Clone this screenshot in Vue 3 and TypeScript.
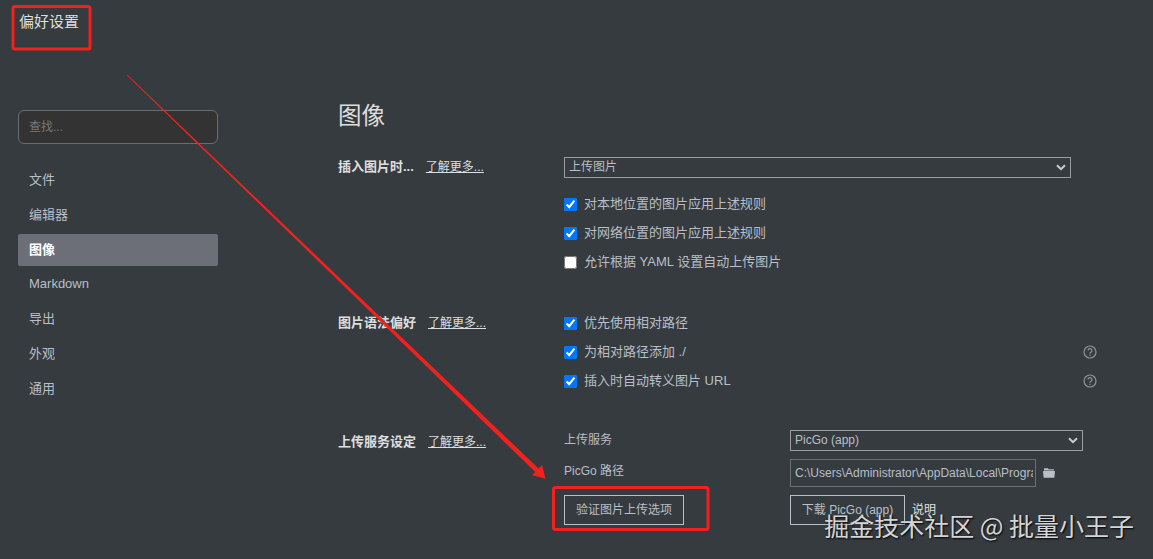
<template>
  <div class="preferences">
    <header class="title-bar">
      <span class="title">偏好设置</span>
    </header>

    <div class="body">
      <aside class="sidebar">
        <input v-model="keyword" class="search" type="text" placeholder="查找..." />
        <nav class="menu">
          <a v-for="item in menuItems" :key="item" class="menu-item" :class="{ active: item === activeItem }"
            @click="activeItem = item">{{ item }}</a>
        </nav>
      </aside>

      <main class="content">
        <h2>图像</h2>

        <section class="group insert-group">
          <div class="group-label">
            <strong>插入图片时...</strong>
            <a class="more">了解更多...</a>
          </div>
          <div class="group-body">
            <div class="select wide">
              <span>上传图片</span>
              <svg class="chevron" viewBox="0 0 10 7"><path d="M1 1.2 5 5.2 9 1.2" /></svg>
            </div>
            <label v-for="rule in insertRules" :key="rule.text" class="check-row">
              <input v-model="rule.checked" type="checkbox" />
              <span>{{ rule.text }}</span>
            </label>
          </div>
        </section>

        <section class="group syntax-group">
          <div class="group-label">
            <strong>图片语法偏好</strong>
            <a class="more">了解更多...</a>
          </div>
          <div class="group-body">
            <label v-for="rule in syntaxRules" :key="rule.text" class="check-row">
              <input v-model="rule.checked" type="checkbox" />
              <span>{{ rule.text }}</span>
              <svg v-if="rule.help" class="help" viewBox="0 0 14 14">
                <circle cx="7" cy="7" r="6" />
                <path d="M5 5.6a2 2 0 1 1 3 1.7c-.7.4-1 .7-1 1.4" />
                <path d="M7 9.7v1.2" />
              </svg>
            </label>
          </div>
        </section>

        <section class="group upload-group">
          <div class="group-label">
            <strong>上传服务设定</strong>
            <a class="more">了解更多...</a>
          </div>
          <div class="group-body upload-grid">
            <span class="field-name">上传服务</span>
            <div class="select">
              <span>PicGo (app)</span>
              <svg class="chevron" viewBox="0 0 10 7"><path d="M1 1.2 5 5.2 9 1.2" /></svg>
            </div>

            <span class="field-name path-name">PicGo 路径</span>
            <div class="path-row">
              <div class="path-input"><span>{{ picgoPath }}</span></div>
              <svg class="folder" viewBox="0 0 12 10">
                <path d="M1 2.6V.9Q1 .3 1.6.3H4.8Q5.4.3 5.4.9V1.2H10.4Q11 1.2 11 1.8V2.6Z" />
                <path d="M.5 3H11.5Q12 3 12 3.5L11.4 9.2Q11.3 9.7 10.8 9.7H1.2Q.7 9.7.6 9.2L0 3.5Q0 3 .5 3Z" />
              </svg>
            </div>

            <div class="verify">
              <button class="btn verify-btn">验证图片上传选项</button>
            </div>
            <div class="download">
              <button class="btn download-btn">下载 PicGo (app)</button>
              <a class="doc-link">说明</a>
            </div>
          </div>
        </section>
      </main>
    </div>

    <svg class="marks" viewBox="0 0 1153 559">
      <rect x="13" y="6.5" width="77" height="42.5" rx="2" />
      <rect x="553.5" y="487.5" width="154.5" height="42" rx="2" />
      <polygon points="127,75.4 127.5,74.8 538.5,468.5 542,465 545.5,478.8 532,475 535.3,472" />
    </svg>
    <div class="watermark">掘金技术社区 @ 批量小王子</div>
  </div>
</template>

<script setup lang="ts">
import { ref } from "vue";

interface Rule {
  text: string;
  checked: boolean;
  help?: boolean;
}

const keyword = ref("");
const activeItem = ref("图像");
const menuItems = ["文件", "编辑器", "图像", "Markdown", "导出", "外观", "通用"];
const picgoPath = "C:\\Users\\Administrator\\AppData\\Local\\Progra";

const insertRules = ref<Rule[]>([
  { text: "对本地位置的图片应用上述规则", checked: true },
  { text: "对网络位置的图片应用上述规则", checked: true },
  { text: "允许根据 YAML 设置自动上传图片", checked: false },
]);

const syntaxRules = ref<Rule[]>([
  { text: "优先使用相对路径", checked: true },
  { text: "为相对路径添加 ./", checked: true, help: true },
  { text: "插入时自动转义图片 URL", checked: true, help: true },
]);
</script>

<style>
body {
  background: #363b40;
  overflow: hidden;
}
</style>

<style scoped>
* {
  box-sizing: border-box;
}

.preferences {
  position: relative;
  width: 1153px;
  height: 559px;
  overflow: hidden;
  background: #363b40;
  color: #b8bfc6;
  font-family: "Liberation Sans", "Noto Sans CJK SC", sans-serif;
  font-size: 13px;
  line-height: 20px;
}

.title-bar {
  height: 110px;
  padding: 12px 19px;
}

.title {
  color: #dedede;
  font-size: 15px;
}

.body {
  display: flex;
  padding-left: 18px;
}

.sidebar {
  width: 200px;
  margin-right: 120px;
  flex-shrink: 0;
}

.search {
  display: block;
  width: 200px;
  height: 34px;
  padding: 0 10px;
  border: 1px solid #6b6c6d;
  border-radius: 6px;
  background: #333;
  color: #b8bfc6;
  font-family: inherit;
  font-size: 12px;
  outline: none;
}

.search::placeholder {
  color: #777;
}

.menu {
  display: flex;
  flex-direction: column;
  gap: 2.8px;
  margin-top: 20px;
}

.menu-item {
  height: 32px;
  padding: 0 11px;
  border-radius: 2px;
  line-height: 31px;
  cursor: pointer;
}

.menu-item.active {
  background: #6d6f78;
  color: #fff;
  font-weight: bold;
}

.content {
  width: 815px;
  margin-top: -10px;
}

h2 {
  height: 57px;
  margin: 0;
  color: #dedede;
  font-size: 23.5px;
  font-weight: normal;
  line-height: 32px;
}

.group {
  display: flex;
  align-items: flex-start;
}

.insert-group {
  height: 156px;
}

.syntax-group {
  height: 117px;
}

.group-label {
  display: flex;
  align-items: center;
  gap: 12px;
  width: 226px;
  flex-shrink: 0;
  color: #dedede;
}

.upload-group .group-label {
  margin-top: 2px;
}

.more {
  font-size: 12px;
  text-decoration: underline;
}

.select {
  display: flex;
  align-items: center;
  justify-content: space-between;
  width: 293px;
  height: 21px;
  padding: 0 4px;
  border: 1px solid #9a9da0;
  font-size: 12px;
  line-height: 18px;
}

.select span {
  margin-top: -1px;
}

.select.wide {
  width: 507px;
  margin-bottom: 12px;
}

.chevron {
  width: 10px;
  height: 7px;
  fill: none;
  stroke: #c8ccd0;
  stroke-width: 2;
}

.check-row {
  display: flex;
  align-items: center;
  width: 533px;
  height: 29px;
}

.check-row input {
  width: 13px;
  height: 13px;
  margin: 0 7px 0 0;
}

.check-row span {
  margin-top: -1px;
}

.help {
  width: 14px;
  height: 14px;
  margin: -2px 0 0 auto;
  fill: none;
  stroke: #8e9397;
  stroke-width: 1.2;
}

.syntax-group .group-body {
  margin-top: -4px;
}

.upload-grid {
  display: grid;
  grid-template-columns: 226px 293px;
  grid-template-rows: 29px 36px 30px;
  font-size: 12px;
}

.path-name {
  margin-top: 2px;
}

.path-row,
.download {
  display: flex;
  align-items: center;
}

.path-row {
  height: 28px;
}

.path-input {
  width: 246px;
  height: 28px;
  padding: 0 2px 0 4px;
  border: 1px solid #6c7074;
  line-height: 26px;
}

.path-input span {
  display: block;
  overflow: hidden;
  white-space: nowrap;
}

.folder {
  width: 12px;
  height: 10px;
  margin-left: 7px;
  fill: #b8bfc6;
}

.btn {
  display: block;
  height: 30px;
  padding: 0 0 3px;
  border: 1px solid #b8bfc6;
  background: transparent;
  color: #b8bfc6;
  font-family: inherit;
  font-size: 12px;
}

.verify-btn {
  width: 120px;
}

.download-btn {
  width: 115px;
}

.doc-link {
  margin-left: 7px;
  color: #e0e0e0;
}

/* annotations drawn over the window */
.marks {
  position: absolute;
  top: 0;
  left: 0;
  width: 1153px;
  height: 559px;
  pointer-events: none;
}

.marks rect {
  fill: none;
  stroke: #f3211d;
  stroke-width: 3;
}

.marks polygon {
  fill: #f3211d;
}

.watermark {
  position: absolute;
  right: 19px;
  bottom: 16px;
  color: #d4d5d6;
  font-family: "Noto Sans CJK SC", sans-serif;
  font-size: 25px;
  line-height: 36px;
  white-space: nowrap;
  text-shadow: 1px 1px 2px #000;
}
</style>
